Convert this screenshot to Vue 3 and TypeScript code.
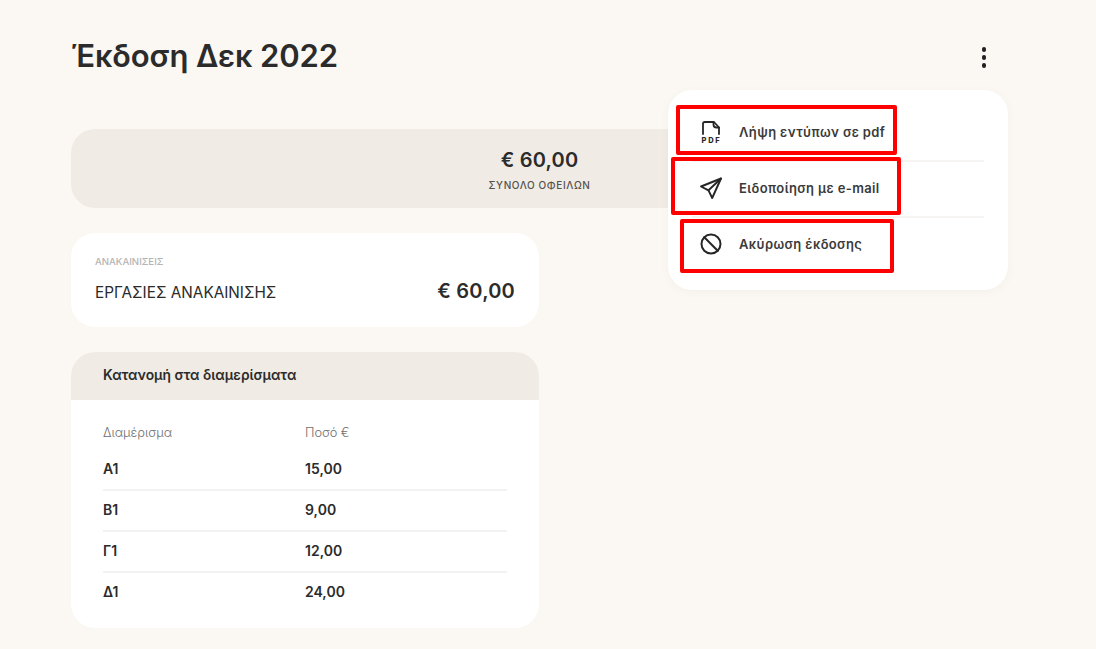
<script setup lang="ts">
const rows: { apt: string; amount: string }[] = [
  { apt: 'Α1', amount: '15,00' },
  { apt: 'Β1', amount: '9,00' },
  { apt: 'Γ1', amount: '12,00' },
  { apt: 'Δ1', amount: '24,00' },
];
</script>

<template>
  <div class="page">
    <header class="top">
      <h1>Έκδοση Δεκ 2022</h1>
      <button class="kebab" aria-label="Μενού"><i></i><i></i><i></i></button>
    </header>

    <section class="summary">
      <div class="sum-value">€ 60,00</div>
      <div class="sum-label">ΣΥΝΟΛΟ ΟΦΕΙΛΩΝ</div>
    </section>

    <section class="card reno">
      <div class="reno-cat">ΑΝΑΚΑΙΝΙΣΕΙΣ</div>
      <div class="reno-row">
        <span class="reno-name">ΕΡΓΑΣΙΕΣ ΑΝΑΚΑΙΝΙΣΗΣ</span>
        <span class="reno-val">€ 60,00</span>
      </div>
    </section>

    <section class="card dist">
      <div class="dist-head">Κατανομή στα διαμερίσματα</div>
      <div class="dist-body">
        <div class="row th"><span>Διαμέρισμα</span><span>Ποσό €</span></div>
        <div v-for="r in rows" :key="r.apt" class="row td">
          <span>{{ r.apt }}</span><span>{{ r.amount }}</span>
        </div>
      </div>
    </section>

    <nav class="menu">
      <div class="item">
        <svg class="ico" viewBox="0 0 24 24" width="24" height="24" fill="none" stroke="#262626" stroke-width="1.8" stroke-linecap="round" stroke-linejoin="round">
          <path d="M4 14V3.800A1.800 1.800 0 0 1 5.800 2H15l5 5.500V14" />
          <path d="M14.500 2v2.500A3 3 0 0 0 17.500 7.500H20" />
          <text x="12.500" y="22.500" text-anchor="middle" class="pdf" stroke="none" fill="#262626">PDF</text>
        </svg>
        <span>Λήψη εντύπων σε pdf</span>
      </div>
      <div class="item">
        <svg class="ico" viewBox="0 0 24 24" width="24" height="24" fill="none" stroke="#262626" stroke-width="1.9" stroke-linecap="round" stroke-linejoin="round">
          <path d="M22 2.500 2 10.500l7.500 3.800 3.700 7.700L22 2.500Z" />
          <path d="M22 2.500 9.500 14.300" />
        </svg>
        <span>Ειδοποίηση με e-mail</span>
      </div>
      <div class="item last">
        <svg class="ico" viewBox="0 0 24 24" width="24" height="24" fill="none" stroke="#262626" stroke-width="2" stroke-linecap="round">
          <circle cx="12" cy="12" r="9.500" />
          <path d="M5.300 5.300l13.400 13.400" />
        </svg>
        <span>Ακύρωση έκδοσης</span>
      </div>
    </nav>

    <div class="mark m1"></div>
    <div class="mark m2"></div>
    <div class="mark m3"></div>
  </div>
</template>

<style>
html, body { margin: 0; background: #fbf8f3; }
</style>

<style scoped>
.page {
  position: relative;
  box-sizing: border-box;
  width: 1096px;
  height: 649px;
  overflow: hidden;
  padding: 33px 88px 0 71px;
  background: #fbf8f3;
  font-family: Inter, "Noto Sans", sans-serif;
  color: #2b2b2b;
}
.top {
  display: flex;
  align-items: center;
  justify-content: space-between;
  height: 46px;
}
h1 {
  margin: 0;
  font-size: 31px;
  line-height: 46px;
  font-weight: 600;
  letter-spacing: -0.14px;
}
.kebab {
  display: flex;
  flex-direction: column;
  align-items: center;
  gap: 3.500px;
  margin: 3px 22px 0 0;
  padding: 0;
  border: 0;
  background: none;
}
.kebab i {
  width: 4.500px;
  height: 4.500px;
  border-radius: 50%;
  background: #222;
}
.summary {
  margin-top: 50px;
  height: 79px;
  border-radius: 24px;
  background: #f0ebe5;
  display: flex;
  flex-direction: column;
  align-items: center;
}
.sum-value {
  margin-top: 19px;
  font-size: 20px;
  line-height: 24px;
  font-weight: 600;
  letter-spacing: 0.2px;
}
.sum-label {
  margin-top: 6px;
  font-size: 10px;
  line-height: 14px;
  font-weight: 500;
  letter-spacing: 0.6px;
  color: #55524e;
}
.card {
  width: 468px;
  background: #fff;
  border-radius: 24px;
}
.reno {
  box-sizing: border-box;
  margin-top: 25px;
  height: 94px;
  padding: 22px 24px 0;
}
.reno-cat {
  font-size: 9.600px;
  line-height: 13px;
  font-weight: 500;
  color: #b4b4b4;
}
.reno-row {
  margin-top: 9px;
  display: flex;
  justify-content: space-between;
  align-items: center;
}
.reno-name {
  margin-top: 5px;
  font-size: 15.300px;
  line-height: 22px;
}
.reno-val {
  font-size: 20px;
  line-height: 22px;
  font-weight: 600;
  letter-spacing: 0.2px;
}
.dist {
  margin-top: 25px;
  height: 276px;
  overflow: hidden;
}
.dist-head {
  box-sizing: border-box;
  height: 48px;
  padding: 0 32px;
  background: #f0ebe5;
  font-size: 13.800px;
  line-height: 46px;
  font-weight: 600;
}
.dist-body {
  padding: 20px 32px 0;
}
.row {
  display: grid;
  grid-template-columns: 202px 1fr;
}
.th {
  height: 30px;
  font-size: 12.800px;
  line-height: 26px;
  font-weight: 300;
  color: #6f6f6f;
}
.td {
  box-sizing: border-box;
  height: 41px;
  border-bottom: 2px solid #f3f2f0;
  font-size: 14px;
  line-height: 38px;
  font-weight: 600;
}
.td:last-child { border-bottom: 0; }
.menu {
  position: absolute;
  left: 668px;
  top: 90px;
  box-sizing: border-box;
  width: 340px;
  height: 200px;
  padding: 16px 24px;
  background: #fff;
  border-radius: 24px;
  box-shadow: 0 2px 8px rgba(120, 100, 70, 0.05);
}
.item {
  box-sizing: border-box;
  display: flex;
  align-items: center;
  gap: 16px;
  height: 56px;
  padding: 0 0 2px 7px;
  border-bottom: 2px solid #f5f4f2;
  font-size: 13px;
  font-weight: 600;
  letter-spacing: 0.38px;
  color: #3a3a3a;
}
.item.last { border-bottom: 0; padding-bottom: 4px; }
.ico { flex: none; }
.pdf {
  font-size: 7.500px;
  font-weight: 800;
  letter-spacing: 1.800px;
  font-family: Inter, sans-serif;
}
.mark {
  position: absolute;
  box-sizing: border-box;
  border: 4px solid #ff0000;
  border-radius: 2px;
}
.m1 { left: 676px; top: 105px; width: 221px; height: 50px; }
.m2 { left: 671px; top: 157px; width: 230px; height: 58px; }
.m3 { left: 680px; top: 219px; width: 214px; height: 54px; }
</style>
